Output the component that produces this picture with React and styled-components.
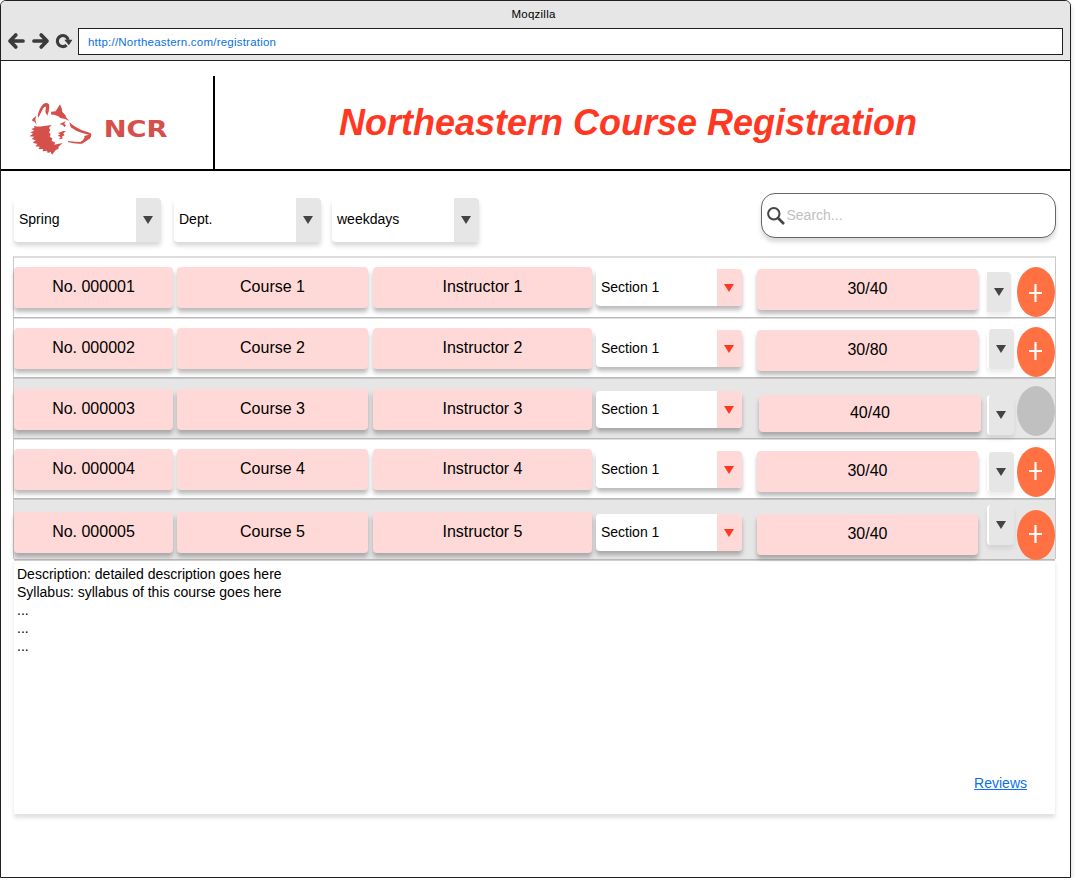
import React from "react";
import styled, { createGlobalStyle } from "styled-components";

const GlobalStyle = createGlobalStyle`
  * { box-sizing: border-box; }
  body { margin: 0; background: #fff; color: #000; font-family: "Liberation Sans", Arial, sans-serif; }
`;

const Browser = styled.div`
  width: 1071px;
  height: 878px;
  border: 1px solid #231f20;
  border-radius: 6px 6px 0 0;
  background: #fff;
  box-shadow: 1px 4px 4px rgba(0, 0, 0, 0.13);
`;

const Chrome = styled.div`
  height: 60px;
  background: #e6e6e6;
  border-bottom: 1px solid #231f20;
  border-radius: 5px 5px 0 0;
`;

const WindowTitle = styled.div`
  height: 27px;
  padding-right: 4px;
  line-height: 26px;
  font-size: 11.5px;
  letter-spacing: 0.25px;
  text-align: center;
`;

const NavBar = styled.div`
  display: flex;
  align-items: center;
  height: 27px;
  padding: 0 7px 0 6px;
`;

const NavIcons = styled.svg`
  width: 71px;
  height: 27px;
  flex: none;
`;

const AddressBar = styled.div`
  flex: 1;
  height: 27px;
  padding-left: 9px;
  border: 1px solid #231f20;
  background: #fff;
  color: #0b70e8;
  font-size: 11.5px;
  letter-spacing: 0.22px;
  line-height: 26px;
`;

const Masthead = styled.header`
  display: flex;
  height: 110px;
  padding-top: 15px;
  border-bottom: 2px solid #000;
`;

const LogoArea = styled.div`
  width: 214px;
  padding: 26px 0 0 27px;
  border-right: 2px solid #000;
`;

const LogoSvg = styled.svg`
  display: block;
`;

const PageTitle = styled.h1`
  flex: 1;
  margin: 0;
  padding-right: 29px;
  text-align: center;
  color: #ff3823;
  font-size: 36px;
  font-style: italic;
  line-height: 93px;
  white-space: nowrap;
`;

const Filters = styled.div`
  display: flex;
  align-items: flex-start;
  height: 85px;
  padding: 22px 14px 0 13px;
`;

const SelectBox = styled.div`
  display: flex;
  flex: none;
  width: ${(p) => p.$width}px;
  height: ${(p) => p.$height}px;
  margin: ${(p) => p.$top}px ${(p) => p.$gap}px 0 0;
  border-radius: 4px;
  background: #fff;
  box-shadow: 0 4px 4px rgba(0, 0, 0, ${(p) => p.$shade});
`;

const SelectLabel = styled.span`
  flex: 1;
  padding-left: 5px;
  font-size: 14px;
  line-height: ${(p) => p.$line}px;
`;

const SelectButton = styled.span`
  display: flex;
  align-items: center;
  justify-content: center;
  width: 25px;
  padding-right: 1px;
  border-radius: 0 4px 4px 0;
  background: ${(p) => (p.$red ? "#ffd9d7" : "#e6e6e6")};
`;

const Triangle = styled.span`
  width: 0;
  height: 0;
  border: 5px solid transparent;
  border-top: 8px solid ${(p) => (p.$red ? "#ff3823" : "#444")};
  border-bottom: 0;
`;

const SearchBox = styled.div`
  display: flex;
  width: 295px;
  height: 45px;
  margin-left: auto;
  border: 1px solid #666;
  border-radius: 14px;
  background: #fff;
  color: #bfbfbf;
  box-shadow: 0 4px 4px rgba(0, 0, 0, 0.15);
  font-size: 14px;
  line-height: 42px;
`;

const SearchIcon = styled.svg`
  width: 24.5px;
  height: 42px;
`;

const CourseList = styled.div`
  width: 1043px;
  margin-left: 12px;
`;

const CourseRow = styled.div`
  display: flex;
  align-items: flex-start;
  height: ${(p) => p.$height}px;
  border: 1px solid #c9c9c9;
  border-top: 1px solid ${(p) => (p.$first ? "#dedede" : "#b9b9b9")};
  border-bottom: 0;
  background: ${(p) => (p.$shaded ? "#e6e6e6" : "#fff")};
  box-shadow: inset 0 1px 0 rgba(0, 0, 0, 0.13);
`;

const Chip = styled.div`
  flex: none;
  width: ${(p) => p.$width}px;
  height: ${(p) => p.$height || 41}px;
  margin: ${(p) => p.$top}px ${(p) => p.$gap}px 0 0;
  border-radius: 4px;
  background: #ffd9d7;
  box-shadow: 0 4px 4px rgba(0, 0, 0, 0.27);
  font-size: 16px;
  line-height: ${(p) => (p.$height ? 36 : 40)}px;
  text-align: center;
`;

const Expander = styled.div`
  display: flex;
  flex: none;
  align-items: center;
  justify-content: center;
  width: ${(p) => (p.$strip ? 27 : 24)}px;
  height: 40px;
  margin: ${(p) => p.$top}px ${(p) => (p.$strip ? 3 : 6)}px 0 0;
  padding-right: ${(p) => (p.$strip ? 1 : 0)}px;
  border-left: ${(p) => (p.$strip ? "2px solid #fff" : "0")};
  border-radius: ${(p) => (p.$strip ? "4px" : "0 4px 4px 0")};
  background: #e6e6e6;
  box-shadow: 0 4px 4px rgba(0, 0, 0, 0.08);
`;

const AddButton = styled.div`
  flex: none;
  width: 38px;
  height: 50px;
  margin-top: ${(p) => p.$top}px;
  border-radius: 50%;
  background: ${(p) => (p.$full ? "#c0c0c0" : "#ff7043")};
`;

const Details = styled.section`
  display: flex;
  flex-direction: column;
  justify-content: space-between;
  width: 1041px;
  height: 255px;
  margin-left: 13px;
  padding: 4px 28px 22px 3px;
  border-top: 1px solid #b9b9b9;
  background: #fff;
  box-shadow: 0 4px 4px rgba(0, 0, 0, 0.12), inset 0 1px 0 #cfcfcf;
  font-size: 14px;
  line-height: 18px;
`;

const Notes = styled.div`
  padding-top: 1px;
`;

const ReviewsLink = styled.a`
  align-self: flex-end;
  color: #0b70e8;
  text-decoration: underline;
`;

const courses = [
  { n: 1, seats: "30/40", height: 61, chip: 10, seat: 12, exp: 15, add: 10, plus: 26 },
  { n: 2, seats: "30/80", height: 60, chip: 10, seat: 12, exp: 11, add: 9, plus: 24, strip: true },
  { n: 3, seats: "40/40", height: 61, chip: 11, seat: 17, exp: 17, add: 8, strip: true, full: true, shaded: true },
  { n: 4, seats: "30/40", height: 60, chip: 10, seat: 12, exp: 13, add: 8, plus: 24, strip: true },
  { n: 5, seats: "30/40", height: 61, chip: 13, seat: 15, exp: 6, add: 11, plus: 24, strip: true, shaded: true },
];

function Select({ label, width, height, top = 0, gap, red }) {
  return (
    <SelectBox $width={width} $height={height} $top={top} $gap={gap} $shade={red ? 0.27 : 0.15}>
      <SelectLabel $line={height - (red ? 1 : 2)}>{label}</SelectLabel>
      <SelectButton $red={red}><Triangle $red={red} /></SelectButton>
    </SelectBox>
  );
}

function Logo() {
  return (
    <LogoSvg width="142" height="54" viewBox="54 36 426 162" fill="#d5504b">
      <path d="M83 78Q87 57 99 43Q109 35 117 43Q120 59 112 77L106 66L108 51Q104 48 99 56L85 83Z" />
      <path d="M67 88L79 77L76 89L80 104L74 95L67 93Z" />
      <path d="M123 65L137 64L150 43L156 58L157 66L166 75L169 83L179 93L165 87L151 84L145 79L132 74L124 74Z" />
      <path d="M148 102L167 94L163 102L168 106L164 112L158 105Z" />
      <path d="M178 96Q189 108 216 121L241 129Q248 135 239 146L216 161Q195 163 174 156L174 153Q194 156 211 156Q221 151 224 142L222 138L237 134L219 130Q196 123 182 112Z" />
      <path d="M144 129L160 123L168 124L160 130L164 136L157 139L157 146L147 148L152 141L143 137L151 133Z" />
      <path d="M71 107Q82 111 97 109L125 105L117 114L121 119L117 127L122 133L119 140L127 145L125 153L135 157L133 164L158 159L145 171L146 177L138 179L126 194L122 186L113 189L111 182L98 184L99 177L86 178L89 170L76 169L82 162L68 158L77 151L65 147L73 140L58 139L69 131L61 127L73 122L64 117L74 113Z" />
      <text x="281" y="142" fontFamily="DejaVu Sans" fontWeight="700" fontSize="67" textLength="192" lengthAdjust="spacingAndGlyphs">NCR</text>
    </LogoSvg>
  );
}

function Plus({ offset }) {
  return (
    <svg width="38" height="50" viewBox="0 0 38 50" stroke="#fff" strokeWidth="2.2">
      <path d={`M12 ${offset}H25M18.5 ${offset - 9}V${offset + 9}`} />
    </svg>
  );
}

export default function App() {
  return (
    <>
      <GlobalStyle />
      <Browser>
        <Chrome>
          <WindowTitle>Moqzilla</WindowTitle>
          <NavBar>
            <NavIcons viewBox="7 28 71 27" fill="none" stroke="#3b3b3b" strokeWidth="3.7" strokeLinecap="round" strokeLinejoin="round">
              <path d="M23 41H10.5M15.8 35L10 41L15.8 47M34 41H46.5M41.2 35L47 41L41.2 47" />
              <path d="M66.6 45.1A5.5 5.5 0 1 1 68.2 39.8" strokeWidth="3.1" strokeLinecap="butt" />
              <path d="M64.3 39.8L72.4 39.8L68.9 45.2Z" fill="#3b3b3b" stroke="none" />
            </NavIcons>
            <AddressBar>http://Northeastern.com/registration</AddressBar>
          </NavBar>
        </Chrome>
        <Masthead>
          <LogoArea><Logo /></LogoArea>
          <PageTitle>Northeastern Course Registration</PageTitle>
        </Masthead>
        <Filters>
          <Select label="Spring" width={147} height={44} top={5} gap={13} />
          <Select label="Dept." width={147} height={44} top={5} gap={11} />
          <Select label="weekdays" width={147} height={44} top={5} gap={0} />
          <SearchBox>
            <SearchIcon viewBox="0 0 24.5 42" fill="none" stroke="#444" strokeWidth="2">
              <circle cx="11.8" cy="19.8" r="5.7" />
              <path d="M16 24L22 30" strokeWidth="2.6" />
            </SearchIcon>
            Search...
          </SearchBox>
        </Filters>
        <CourseList>
          {courses.map((c) => (
            <CourseRow key={c.n} $height={c.height} $shaded={c.shaded} $first={c.n === 1}>
              <Chip $width={159} $gap={4} $top={c.chip}>No. 00000{c.n}</Chip>
              <Chip $width={191} $gap={5} $top={c.chip}>Course {c.n}</Chip>
              <Chip $width={219} $gap={4} $top={c.chip}>Instructor {c.n}</Chip>
              <Select label="Section 1" width={146} height={37} top={c.chip + 2} gap={c.full ? 17 : 15} red />
              <Chip $width={c.full ? 222 : 221} $height={c.full ? 37 : undefined} $gap={c.full ? 6 : 9} $top={c.seat}>{c.seats}</Chip>
              <Expander $top={c.exp} $strip={c.strip}><Triangle /></Expander>
              <AddButton $top={c.add} $full={c.full}>{!c.full && <Plus offset={c.plus} />}</AddButton>
            </CourseRow>
          ))}
        </CourseList>
        <Details>
          <Notes>
            <div>Description: detailed description goes here</div>
            <div>Syllabus: syllabus of this course goes here</div>
            <div>...</div>
            <div>...</div>
            <div>...</div>
          </Notes>
          <ReviewsLink>Reviews</ReviewsLink>
        </Details>
      </Browser>
    </>
  );
}
